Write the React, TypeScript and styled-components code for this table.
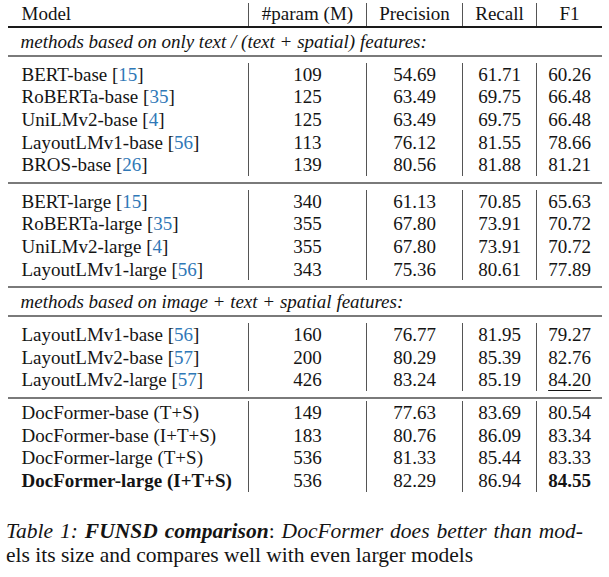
import React from 'react'
import styled, { createGlobalStyle } from 'styled-components'

type Entry = {
  model: string
  cite?: number
  params: string
  precision: string
  recall: string
  f1: string
  bold?: boolean
  underlineF1?: boolean
}

const onlyText: Entry[][] = [
  [
    { model: 'BERT-base', cite: 15, params: '109', precision: '54.69', recall: '61.71', f1: '60.26' },
    { model: 'RoBERTa-base', cite: 35, params: '125', precision: '63.49', recall: '69.75', f1: '66.48' },
    { model: 'UniLMv2-base', cite: 4, params: '125', precision: '63.49', recall: '69.75', f1: '66.48' },
    { model: 'LayoutLMv1-base', cite: 56, params: '113', precision: '76.12', recall: '81.55', f1: '78.66' },
    { model: 'BROS-base', cite: 26, params: '139', precision: '80.56', recall: '81.88', f1: '81.21' }
  ],
  [
    { model: 'BERT-large', cite: 15, params: '340', precision: '61.13', recall: '70.85', f1: '65.63' },
    { model: 'RoBERTa-large', cite: 35, params: '355', precision: '67.80', recall: '73.91', f1: '70.72' },
    { model: 'UniLMv2-large', cite: 4, params: '355', precision: '67.80', recall: '73.91', f1: '70.72' },
    { model: 'LayoutLMv1-large', cite: 56, params: '343', precision: '75.36', recall: '80.61', f1: '77.89' }
  ]
]

const withImage: Entry[][] = [
  [
    { model: 'LayoutLMv1-base', cite: 56, params: '160', precision: '76.77', recall: '81.95', f1: '79.27' },
    { model: 'LayoutLMv2-base', cite: 57, params: '200', precision: '80.29', recall: '85.39', f1: '82.76' },
    { model: 'LayoutLMv2-large', cite: 57, params: '426', precision: '83.24', recall: '85.19', f1: '84.20', underlineF1: true }
  ],
  [
    { model: 'DocFormer-base (T+S)', params: '149', precision: '77.63', recall: '83.69', f1: '80.54' },
    { model: 'DocFormer-base (I+T+S)', params: '183', precision: '80.76', recall: '86.09', f1: '83.34' },
    { model: 'DocFormer-large (T+S)', params: '536', precision: '81.33', recall: '85.44', f1: '83.33' },
    { model: 'DocFormer-large (I+T+S)', params: '536', precision: '82.29', recall: '86.94', f1: '84.55', bold: true }
  ]
]

const renderGroups = (groups: Entry[][], last: boolean) =>
  groups.map((group, gi) => {
    const isLast = last && gi === groups.length - 1
    return (
      <React.Fragment key={gi}>
        <Group $tight={isLast}>
          {group.map((r, ri) => (
            <Row key={ri}>
              <Cell $bold={r.bold}>
                {r.model}
                {r.cite !== undefined && (
                  <>
                    {' '}[<Cite>{r.cite}</Cite>]
                  </>
                )}
              </Cell>
              <Cell $center $divider>{r.params}</Cell>
              <Cell $center $divider>{r.precision}</Cell>
              <Cell $center $divider>{r.recall}</Cell>
              <Cell $center $divider $bold={r.bold}>
                {r.underlineF1 ? <Under>{r.f1}</Under> : r.f1}
              </Cell>
            </Row>
          ))}
        </Group>
        {!isLast && <Rule />}
      </React.Fragment>
    )
  })

export default function App() {
  return (
    <>
      <GlobalStyle />
      <Page>
        <Table>
          <HeaderRow>
            <HeadCell>Model</HeadCell>
            <HeadCell $center $divider>#param (M)</HeadCell>
            <HeadCell $center $divider>Precision</HeadCell>
            <HeadCell $center $divider>Recall</HeadCell>
            <HeadCell $center $divider>F1</HeadCell>
          </HeaderRow>
          <Rule $thick />
          <SectionLabel>methods based on only text / (text + spatial) features:</SectionLabel>
          <Rule />
          {renderGroups(onlyText, false)}
          <SectionLabel>methods based on image + text + spatial features:</SectionLabel>
          <Rule />
          {renderGroups(withImage, true)}
        </Table>
        <Caption>
          <CaptionFirst>
            Table 1: <strong>FUNSD comparison</strong><Plain>:</Plain> DocFormer does better than mod-
          </CaptionFirst>
          <CaptionLine>els its size and compares well with even larger models</CaptionLine>
        </Caption>
      </Page>
    </>
  )
}

const GlobalStyle = createGlobalStyle`
  html, body {
    margin: 0;
    padding: 0;
    background: #ffffff;
  }
  body {
    font-family: "Liberation Serif", "Times New Roman", serif;
    color: #141414;
  }
`

const COLS = '240px 118px 96px 74px 66px'

const Page = styled.div`
  width: 609px;
  box-sizing: border-box;
  padding: 0 0 0 8px;
`

const Table = styled.div`
  width: 594px;
  font-size: 19px;
`

const HeaderRow = styled.div`
  display: grid;
  grid-template-columns: ${COLS};
  height: 23px;
  margin-top: 3px;
`

const Row = styled.div`
  display: grid;
  grid-template-columns: ${COLS};
  height: 22.6px;
`

const Cell = styled.div<{ $center?: boolean; $divider?: boolean; $bold?: boolean }>`
  display: flex;
  align-items: center;
  justify-content: ${(p) => (p.$center ? 'center' : 'flex-start')};
  padding-left: ${(p) => (p.$center ? '0' : '13.5px')};
  border-left: ${(p) => (p.$divider ? '1px solid #555' : 'none')};
  font-weight: ${(p) => (p.$bold ? 700 : 400)};
  white-space: nowrap;
  line-height: 1;
`

const HeadCell = styled(Cell)`
  padding-bottom: 2px;
`

const Group = styled.div<{ $tight?: boolean }>`
  padding: ${(p) => (p.$tight ? '2px 0 6px' : '6px 0')};
`

const Rule = styled.div<{ $thick?: boolean }>`
  height: 2px;
  background: ${(p) => (p.$thick ? '#1a1a1a' : '#7a7a7a')};
`

const SectionLabel = styled.div`
  height: 27px;
  display: flex;
  align-items: center;
  padding: 1px 0 0 12.5px;
  box-sizing: border-box;
  font-style: italic;
  white-space: nowrap;
`

const Cite = styled.span`
  color: #2f78b7;
`

const Under = styled.span`
  text-decoration: underline;
  text-decoration-thickness: 1px;
  text-underline-offset: 4px;
`

const Caption = styled.div`
  margin-top: 21px;
  margin-left: -2px;
  width: 577px;
  font-size: 21.5px;
  line-height: 24px;

  strong {
    font-weight: 700;
  }
`

const CaptionLine = styled.div`
  white-space: nowrap;
`

const CaptionFirst = styled(CaptionLine)`
  font-style: italic;
  text-align: justify;
  text-align-last: justify;
`

const Plain = styled.span`
  font-style: normal;
`
